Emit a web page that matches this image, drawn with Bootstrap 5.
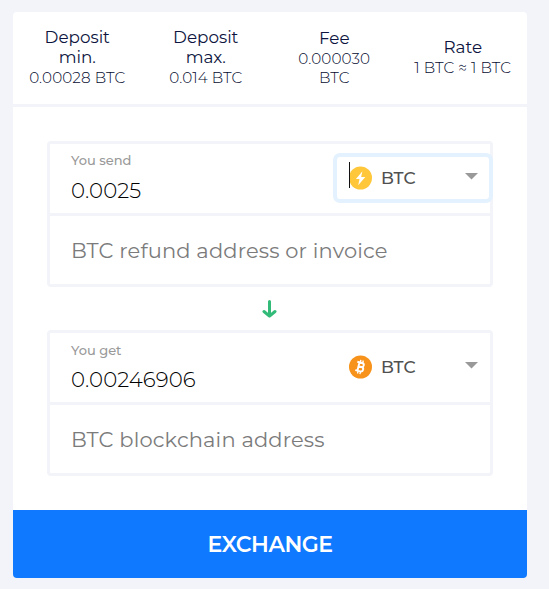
<!DOCTYPE html>
<html lang="en">
<head>
<meta charset="utf-8">
<meta name="viewport" content="width=device-width, initial-scale=1">
<title>Exchange</title>
<link href="https://cdn.jsdelivr.net/npm/bootstrap@5.3.0/dist/css/bootstrap.min.css" rel="stylesheet">
<style>
body{background:#f3f4f9;font-family:Montserrat,Inter,"Open Sans",sans-serif;color:#0d1440;padding:12px 22px 0 13px;white-space:nowrap}
.panel{height:566px;border-radius:4px}
.stats{height:95px;border-bottom:3px solid #f3f4f9;line-height:20px}
.stat-name{font-size:16.8px;line-height:20px}
.stat-value{font-size:15.2px;font-weight:300;letter-spacing:.1px;line-height:19px;padding:1px 0 2px;color:#050b30}
.form-area{padding:34px 34px 0}
.pair{border:3px solid #f3f4f9;border-radius:4px;height:146px}
.amount-row{height:72px;border-bottom:3px solid #f3f4f9;padding-left:21px}
.hint{font-size:13px;font-weight:500;line-height:16px;color:#999;padding-top:8px}
.hint.lower{padding-top:9px}
.hint.lower + .amount{margin-top:7px}
.amount{font-size:21.3px;font-weight:300;letter-spacing:.1px;line-height:28px;color:#000;margin-top:8px}
.address-row{height:68px;padding:1px 0 0 21px;font-size:21px;font-weight:400;letter-spacing:.15px;color:#7b7b7b}
.coin{width:160px;height:50px;margin:9px -3px 0 0;border:4px solid transparent;border-radius:7px;padding:0 11px 0 12px;color:#505050;font-size:17px;font-weight:500}
.coin.active{border-color:#e4f1fe}
.caret-line{left:12px;top:5px;width:1px;height:26px;background:#111}
.coin-name{margin-left:9px;padding-top:1px}
.arrow-row{height:43px}
.go{height:68px;background:#0f79ff;border-radius:0 0 4px 4px;font-size:22px;font-weight:600;letter-spacing:-.5px;color:#fff;border:0}
svg{display:block;flex:none}
</style>
<script src="https://cdn.jsdelivr.net/npm/bootstrap@5.3.0/dist/js/bootstrap.bundle.min.js"></script>
</head>
<body>
<main class="panel bg-white d-flex flex-column">
  <div class="stats row g-0 align-items-center text-center">
    <div class="col"><div class="stat-name">Deposit<br>min.</div><div class="stat-value">0.00028 BTC</div></div>
    <div class="col"><div class="stat-name">Deposit<br>max.</div><div class="stat-value">0.014 BTC</div></div>
    <div class="col"><div class="stat-name">Fee</div><div class="stat-value">0.000030<br>BTC</div></div>
    <div class="col"><div class="stat-name">Rate</div><div class="stat-value">1 BTC ≈ 1 BTC</div></div>
  </div>
  <div class="form-area">
    <section class="pair">
      <div class="amount-row d-flex justify-content-between">
        <div><div class="hint"><span>You send</span></div><div class="amount"><span>0.0025</span></div></div>
        <div class="coin active d-flex align-items-center position-relative">
          <span class="caret-line position-absolute"></span>
          <svg width="23" height="24" viewBox="0 0 24 24"><circle cx="12" cy="12" r="12" fill="#ffc739"/><path d="M14 5 7.2 13H11L9.6 19.5 17 11H12.7Z" fill="#fff"/></svg>
          <span class="coin-name">BTC</span>
          <svg class="ms-auto" width="13" height="10" viewBox="0 0 13 10"><path d="M0 0H13L6.5 6.5Z" fill="#999"/></svg>
        </div>
      </div>
      <div class="address-row d-flex align-items-center"><span>BTC refund address or invoice</span></div>
    </section>
    <div class="arrow-row d-flex justify-content-center align-items-center">
      <svg width="16" height="20" viewBox="0 0 16 20" fill="none" stroke="#32bb78" stroke-width="3" stroke-linecap="round" stroke-linejoin="round"><path d="M7.5 2.5V17M2 12.5 7.5 17.2 13 12.5"/></svg>
    </div>
    <section class="pair">
      <div class="amount-row d-flex justify-content-between">
        <div><div class="hint lower"><span>You get</span></div><div class="amount"><span>0.00246906</span></div></div>
        <div class="coin d-flex align-items-center">
          <svg width="23" height="24" viewBox="0 0 24 24"><circle cx="12" cy="12" r="12" fill="#f7931a"/><g transform="rotate(14 12 12)" fill="none" stroke="#fff" stroke-width="2"><path d="M7.5 7.5H12.7a2.1 2.1 0 0 1 0 4.3H9.6M12.7 11.8H13a2.35 2.35 0 0 1 0 4.7H7.5M9.8 7.5V16.5"/><path d="M10.6 4.7V7.5M13.2 4.7V7.5M10.6 16.5V19.3M13.2 16.5V19.3" stroke-width="1.4"/></g></svg>
          <span class="coin-name">BTC</span>
          <svg class="ms-auto" width="13" height="10" viewBox="0 0 13 10"><path d="M0 0H13L6.5 6.5Z" fill="#999"/></svg>
        </div>
      </div>
      <div class="address-row d-flex align-items-center"><span>BTC blockchain address</span></div>
    </section>
  </div>
  <button class="go mt-auto w-100" type="button">EXCHANGE</button>
</main>
</body>
</html>
